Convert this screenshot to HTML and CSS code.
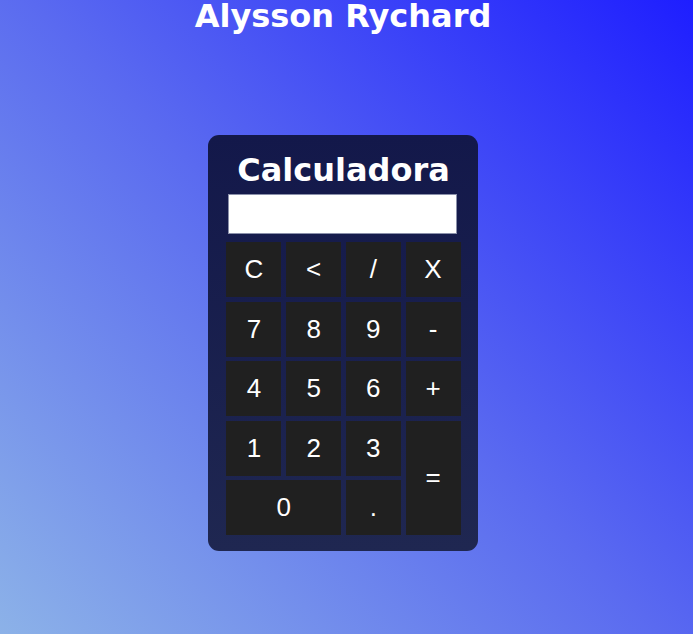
FILE: index.html
```html
<!DOCTYPE html>
<html lang="pt">
<head>
<meta charset="utf-8">
<title>Calculadora</title>
<link rel="stylesheet" href="styles.css">
</head>
<body>
<div class="page">
  <h1 class="author">Alysson Rychard</h1>
  <div class="calc">
    <h2 class="calc-title">Calculadora</h2>
    <div class="display"></div>
    <div class="keys">
      <button class="key">C</button>
      <button class="key">&lt;</button>
      <button class="key">/</button>
      <button class="key">X</button>
      <button class="key">7</button>
      <button class="key">8</button>
      <button class="key">9</button>
      <button class="key">-</button>
      <button class="key">4</button>
      <button class="key">5</button>
      <button class="key">6</button>
      <button class="key">+</button>
      <button class="key">1</button>
      <button class="key">2</button>
      <button class="key">3</button>
      <button class="key key-eq">=</button>
      <button class="key key-zero">0</button>
      <button class="key">.</button>
    </div>
  </div>
</div>
</body>
</html>
```
FILE: styles.css
```css
html, body {
  margin: 0;
  height: 100%;
}
body {
  background: linear-gradient(45deg, #8cb2e8 0%, #5a6af0 50%, #1e1eff 100%);
  font-family: "DejaVu Sans", Verdana, sans-serif;
  overflow: hidden;
}
.page {
  padding-right: 7px;
  display: flex;
  flex-direction: column;
  align-items: center;
}
.author {
  margin: 0;
  font-size: 32px;
  line-height: 1;
  font-weight: bold;
  color: #fff;
}
.calc {
  margin-top: 103px;
  padding: 19px 17px 16px 18px;
  border-radius: 11px;
  background: linear-gradient(to bottom, #13184a, #1f2751);
  display: flex;
  flex-direction: column;
}
.calc-title {
  margin: 0;
  font-size: 32px;
  line-height: 1;
  font-weight: bold;
  color: #fff;
  text-align: center;
}
.display {
  margin: 8px 4px 0 2px;
  height: 38px;
  background: #fff;
  border: 1px solid #8a90aa;
}
.keys {
  margin-top: 8px;
  display: grid;
  grid-template-columns: repeat(4, 55px);
  grid-auto-rows: 55px;
  column-gap: 4.7px;
  row-gap: 4.5px;
}
.key {
  border: none;
  padding: 0;
  margin: 0;
  background: #202020;
  color: #fff;
  font-family: "Liberation Sans", Arial, sans-serif;
  font-size: 26px;
}
.key-eq {
  grid-column: 4;
  grid-row: 4 / span 2;
}
.key-zero {
  grid-column: 1 / span 2;
}
```
